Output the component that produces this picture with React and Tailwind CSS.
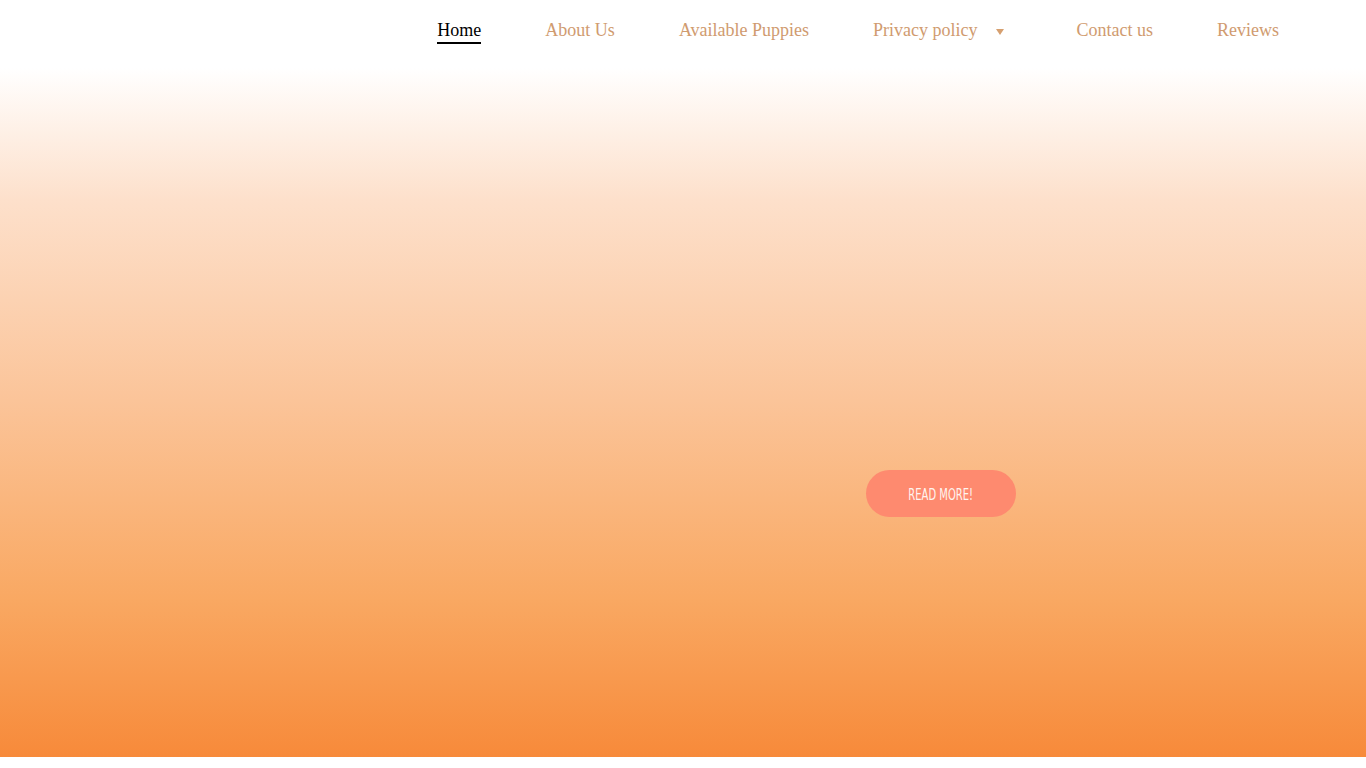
import React from 'react'

const navItems = [
  { label: 'Home', active: true },
  { label: 'About Us' },
  { label: 'Available Puppies' },
  { label: 'Privacy policy', dropdown: true },
  { label: 'Contact us' },
  { label: 'Reviews' },
]

export default function App() {
  return (
    <div className="min-h-[768px] bg-white">
      <div className="h-[757px] bg-[linear-gradient(180deg,#ffffff_0px,#ffffff_68px,#fde0cb_200px,#fbc499_400px,#f9a862_600px,#f78a3a_757px)] flex flex-col">
        <header className="h-[68px] flex items-start justify-end pr-[87px] pt-[19px]">
          <nav className="flex items-center gap-16 font-['Liberation_Serif',serif] text-[18px]">
            {navItems.map(item => (
              <a
                key={item.label}
                href="#"
                className={`flex items-center leading-[22px] ${item.active ? 'text-black' : 'text-[#d09b6f]'} ${item.dropdown ? 'mr-[9px]' : ''}`}
              >
                <span className={`border-b-2 pb-[1px] ${item.active ? 'border-black' : 'border-transparent'}`}>{item.label}</span>
                {item.dropdown && (
                  <svg className="ml-[18px]" width="8" height="6" viewBox="0 0 8 6">
                    <path d="M0 0 L8 0 L4 6 Z" fill="#d6a070" />
                  </svg>
                )}
              </a>
            ))}
          </nav>
        </header>
        <section className="flex-1 pl-[866px] pt-[402px]">
          <button className="w-[150px] h-[47px] rounded-full bg-[#fe8a6f] flex items-center justify-center pt-[3px]">
            <span className="inline-block scale-x-[0.74] text-[#fff4ee] text-[15px] uppercase font-['DejaVu_Sans_Condensed','Liberation_Sans',sans-serif]">
              Read more!
            </span>
          </button>
        </section>
      </div>
    </div>
  )
}
